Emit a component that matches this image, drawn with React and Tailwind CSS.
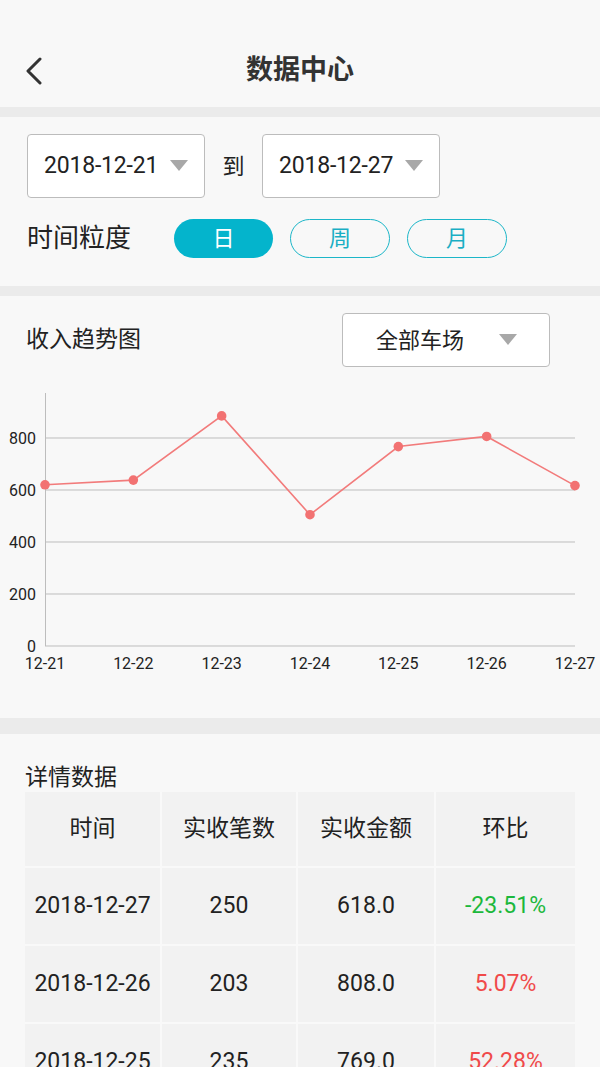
import React from 'react';

const points = [620, 638, 885, 505, 767, 806, 617];
const days = ['12-21', '12-22', '12-23', '12-24', '12-25', '12-26', '12-27'];

const rows = [
  { date: '2018-12-27', count: '250', amount: '618.0', ratio: '-23.51%', up: false },
  { date: '2018-12-26', count: '203', amount: '808.0', ratio: '5.07%', up: true },
  { date: '2018-12-25', count: '235', amount: '769.0', ratio: '52.28%', up: true },
];

function Caret() {
  return (
    <svg width="18" height="12" viewBox="0 0 18 12">
      <path d="M0 0 L18 0 L9 11 Z" fill="#a8a8a8" />
    </svg>
  );
}

function DateBox({ value }) {
  return (
    <div className="w-[178px] h-[64px] bg-white border border-[#bcbcbc] rounded-[4px] flex items-center pl-[16px] pr-[16px] justify-between">
      <span className="text-[23px] text-[#222] tracking-[-0.2px]">{value}</span>
      <Caret />
    </div>
  );
}

function Chart() {
  const x = (i) => 45 + i * 88.33;
  const y = (v) => 279 - (v / 200) * 52;
  const line = points.map((v, i) => `${x(i)},${y(v)}`).join(' ');
  return (
    <svg width="600" height="351" viewBox="0 0 600 351" className="block">
      {[0, 200, 400, 600, 800].map((v) => (
        <g key={v}>
          <line x1="45" x2="575" y1={y(v)} y2={y(v)} stroke="#bdbdbd" strokeWidth="1" />
          <text x="36" y={y(v) + 6} textAnchor="end" fontSize="16" fill="#222">{v}</text>
        </g>
      ))}
      <line x1="45.5" x2="45.5" y1="26" y2="279" stroke="#bdbdbd" strokeWidth="1" />
      <polyline points={line} fill="none" stroke="#f27b7b" strokeWidth="1.6" />
      {points.map((v, i) => (
        <circle key={i} cx={x(i)} cy={y(v)} r="4.8" fill="#f27272" />
      ))}
      {days.map((d, i) => (
        <text key={d} x={x(i)} y="302" textAnchor="middle" fontSize="16" fill="#222">{d}</text>
      ))}
    </svg>
  );
}

export default function App() {
  return (
    <div className="min-h-screen bg-[#f8f8f8] text-[#222] font-['Roboto','Noto_Sans_CJK_SC',sans-serif]">
      {/* 顶部标题 */}
      <div className="h-[107px] pt-[40px]">
        <div className="relative h-[60px] flex items-center justify-center">
          <svg className="absolute left-[24px] top-[17px]" width="20" height="28" viewBox="0 0 20 28">
            <path d="M16 2 L4 14 L16 26" fill="none" stroke="#333" strokeWidth="3" strokeLinecap="round" strokeLinejoin="round" />
          </svg>
          <span className="text-[27px] font-bold text-[#333]">数据中心</span>
        </div>
      </div>
      <div className="h-[10px] bg-[#ebebeb]" />

      {/* 日期筛选 */}
      <div className="pt-[17px] pb-[28px] px-[27px]">
        <div className="flex items-center">
          <DateBox value="2018-12-21" />
          <span className="w-[57px] text-center text-[22px]">到</span>
          <DateBox value="2018-12-27" />
        </div>
        <div className="flex items-center mt-[21px]">
          <span className="text-[26px] w-[147px]">时间粒度</span>
          <div className="flex gap-[17px]">
            <button className="w-[99px] h-[39px] rounded-full bg-[#04b4cc] text-white text-[22px]">日</button>
            <button className="w-[100px] h-[39px] rounded-full border border-[#1cb6c8] text-[#1aaec4] text-[22px]">周</button>
            <button className="w-[100px] h-[39px] rounded-full border border-[#1cb6c8] text-[#1aaec4] text-[22px]">月</button>
          </div>
        </div>
      </div>
      <div className="h-[10px] bg-[#ebebeb]" />

      {/* 收入趋势图 */}
      <div className="pt-[17px]">
        <div className="flex items-center justify-between pl-[26px] pr-[50px]">
          <span className="text-[23px]">收入趋势图</span>
          <div className="w-[208px] h-[54px] bg-white border border-[#bcbcbc] rounded-[4px] flex items-center pl-[33px] pr-[32px] justify-between">
            <span className="text-[22px]">全部车场</span>
            <Caret />
          </div>
        </div>
        <Chart />
      </div>
      <div className="h-[16px] bg-[#ebebeb]" />

      {/* 详情数据 */}
      <div className="pt-[30px] px-[25px]">
        <div className="text-[23px] leading-[28px]">详情数据</div>
        <div className="grid grid-cols-[135px_134px_136px_139px] gap-[2px] bg-[#f9f9f9]">
          {['时间', '实收笔数', '实收金额', '环比'].map((h) => (
            <div key={h} className="h-[74px] bg-[#f2f2f2] flex items-center justify-center text-[23px]">{h}</div>
          ))}
          {rows.map((r) => (
            <React.Fragment key={r.date}>
              <div className="h-[76px] bg-[#f2f2f2] flex items-center justify-center text-[23px]">{r.date}</div>
              <div className="h-[76px] bg-[#f2f2f2] flex items-center justify-center text-[23px]">{r.count}</div>
              <div className="h-[76px] bg-[#f2f2f2] flex items-center justify-center text-[23px]">{r.amount}</div>
              <div className={`h-[76px] bg-[#f2f2f2] flex items-center justify-center text-[23px] ${r.up ? 'text-[#f04a4a]' : 'text-[#1cb83c]'}`}>{r.ratio}</div>
            </React.Fragment>
          ))}
        </div>
      </div>
    </div>
  );
}
